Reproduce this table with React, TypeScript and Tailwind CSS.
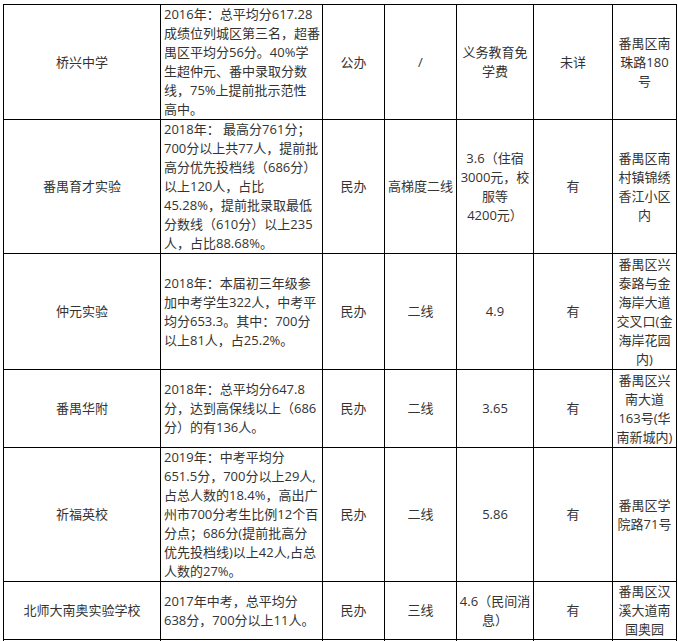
import React from 'react'

interface School {
  name: string
  desc: string[]
  type: string
  line: string
  fee: string[]
  bus: string
  addr: string[]
  h: number
}

const schools: School[] = [
  {
    name: '桥兴中学',
    desc: [
      '2016年：总平均分617.28',
      '成绩位列城区第三名，超番',
      '禺区平均分56分。40%学',
      '生超仲元、番中录取分数',
      '线，75%上提前批示范性',
      '高中。',
    ],
    type: '公办',
    line: '/',
    fee: ['义务教育免', '学费'],
    bus: '未详',
    addr: ['番禺区南', '珠路180', '号'],
    h: 115,
  },
  {
    name: '番禺育才实验',
    desc: [
      '2018年： 最高分761分；',
      '700分以上共77人，提前批',
      '高分优先投档线（686分）',
      '以上120人，占比',
      '45.28%，提前批录取最低',
      '分数线（610分）以上235',
      '人，占比88.68%。',
    ],
    type: '民办',
    line: '高梯度二线',
    fee: ['3.6（住宿', '3000元，校', '服等', '4200元）'],
    bus: '有',
    addr: ['番禺区南', '村镇锦绣', '香江小区', '内'],
    h: 134,
  },
  {
    name: '仲元实验',
    desc: [
      '2018年：本届初三年级参',
      '加中考学生322人，中考平',
      '均分653.3。其中：700分',
      '以上81人，占25.2%。',
    ],
    type: '民办',
    line: '二线',
    fee: ['4.9'],
    bus: '有',
    addr: ['番禺区兴', '泰路与金', '海岸大道', '交叉口(金', '海岸花园', '内)'],
    h: 116,
  },
  {
    name: '番禺华附',
    desc: ['2018年：总平均分647.8', '分，达到高保线以上（686', '分）的有136人。'],
    type: '民办',
    line: '二线',
    fee: ['3.65'],
    bus: '有',
    addr: ['番禺区兴', '南大道', '163号(华', '南新城内)'],
    h: 78,
  },
  {
    name: '祈福英校',
    desc: [
      '2019年：中考平均分',
      '651.5分，700分以上29人,',
      '占总人数的18.4%，高出广',
      '州市700分考生比例12个百',
      '分点；686分(提前批高分',
      '优先投档线)以上42人,占总',
      '人数的27%。',
    ],
    type: '民办',
    line: '二线',
    fee: ['5.86'],
    bus: '有',
    addr: ['番禺区学', '院路71号'],
    h: 132,
  },
  {
    name: '北师大南奥实验学校',
    desc: ['2017年中考，总平均分', '638分，700分以上11人。'],
    type: '民办',
    line: '三线',
    fee: ['4.6（民间消', '息）'],
    bus: '有',
    addr: ['番禺区汉', '溪大道南', '国奥园'],
    h: 58,
  },
]

function Lines({ items }: { items: string[] }) {
  return (
    <>
      {items.map((t, i) => (
        <div key={i} className="whitespace-nowrap">
          {t}
        </div>
      ))}
    </>
  )
}

const cell = 'border border-black align-middle p-0'

export default function App() {
  return (
    <div
      className="w-[678px] h-[641px] overflow-hidden bg-white text-[13px] leading-[19px] text-[#333]"
      style={{ fontFamily: '"Open Sans", "Noto Sans CJK SC", sans-serif' }}
    >
      <table className="table-fixed border-collapse ml-[3px] mt-[4px] w-[673px]">
        <colgroup>
          <col className="w-[157px]" />
          <col className="w-[162px]" />
          <col className="w-[62px]" />
          <col className="w-[72px]" />
          <col className="w-[77px]" />
          <col className="w-[79px]" />
          <col className="w-[64px]" />
        </colgroup>
        <tbody>
          {schools.map((s) => (
            <tr key={s.name} style={{ height: s.h }}>
              <td className={`${cell} text-center`}>{s.name}</td>
              <td className={`${cell} pl-[3px] text-left`}>
                <Lines items={s.desc} />
              </td>
              <td className={`${cell} text-center`}>{s.type}</td>
              <td className={`${cell} text-center`}>{s.line}</td>
              <td className={`${cell} text-center`}>
                <Lines items={s.fee} />
              </td>
              <td className={`${cell} text-center`}>{s.bus}</td>
              <td className={`${cell} text-center`}>
                <Lines items={s.addr} />
              </td>
            </tr>
          ))}
          <tr className="h-[40px]">
            <td className={cell}></td>
            <td className={cell}></td>
            <td className={cell}></td>
            <td className={cell}></td>
            <td className={cell}></td>
            <td className={cell}></td>
            <td className={cell}></td>
          </tr>
        </tbody>
      </table>
    </div>
  )
}
